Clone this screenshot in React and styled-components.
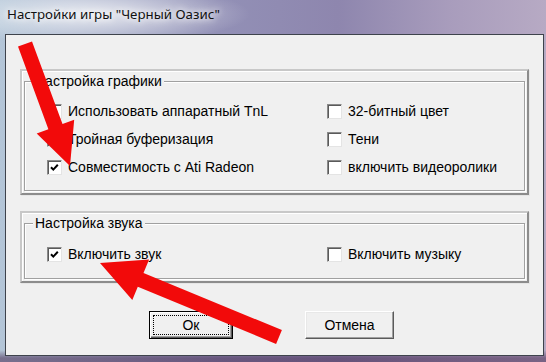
import React from 'react'
import styled, { createGlobalStyle } from 'styled-components'

const Global = createGlobalStyle`
  html, body { margin: 0; padding: 0; background: #8a88b0; }
  body { font-family: "Liberation Sans", Arial, sans-serif; }
`

// arrow polygon from tail to tip
function arrowPoints(tail, tip, shaft, headW, headL) {
  const dx = tip[0] - tail[0]
  const dy = tip[1] - tail[1]
  const len = Math.hypot(dx, dy)
  const ux = dx / len, uy = dy / len
  const px = -uy, py = ux
  const bx = tip[0] - ux * headL, by = tip[1] - uy * headL
  const pts = [
    [tail[0] + px * shaft / 2, tail[1] + py * shaft / 2],
    [bx + px * shaft / 2, by + py * shaft / 2],
    [bx + px * headW / 2, by + py * headW / 2],
    tip,
    [bx - px * headW / 2, by - py * headW / 2],
    [bx - px * shaft / 2, by - py * shaft / 2],
    [tail[0] - px * shaft / 2, tail[1] - py * shaft / 2],
  ]
  return pts.map(p => p[0].toFixed(1) + ',' + p[1].toFixed(1)).join(' ')
}

const graphics = [
  { label: 'Использовать аппаратный TnL' },
  { label: '32-битный цвет' },
  { label: 'Тройная буферизация' },
  { label: 'Тени' },
  { label: 'Совместимость с Ati Radeon', checked: true },
  { label: 'включить видеоролики' },
]

const sound = [
  { label: 'Включить звук', checked: true },
  { label: 'Включить музыку' },
]

function Check({ label, checked }) {
  return (
    <Option>
      <Box>
        {checked && (
          <svg width="11" height="11" viewBox="0 0 11 11">
            <path d="M2 5.2 L4.3 7.6 L8.8 2.8" fill="none" stroke="#000" strokeWidth="2" />
          </svg>
        )}
      </Box>
      <span>{label}</span>
    </Option>
  )
}

export default function App() {
  return (
    <>
      <Global />
      <Window>
        <TitleBar>Настройки игры "Черный Оазис"</TitleBar>
        <Client>
          <Panel $h={126}>
            <Group>
              <Legend>Настройка графики</Legend>
              <Options $rows={3} $top={8}>
                {graphics.map(o => <Check key={o.label} {...o} />)}
              </Options>
            </Group>
          </Panel>
          <Panel $h={72}>
            <Group>
              <Legend>Настройка звука</Legend>
              <Options $rows={1} $top={9}>
                {sound.map(o => <Check key={o.label} {...o} />)}
              </Options>
            </Group>
          </Panel>
          <Buttons>
            <Button $w={84} $default>
              <Focus>Ок</Focus>
            </Button>
            <Button $w={89}>
              <Focus $hidden>Отмена</Focus>
            </Button>
          </Buttons>
        </Client>
        <Arrows width="546" height="362" viewBox="0 0 546 362">
          <polygon points={arrowPoints([25, 44], [70, 166], 15, 40, 42)} fill="#f20a0a" />
          <polygon points={arrowPoints([279, 337], [100, 263], 15, 44, 44)} fill="#f20a0a" />
        </Arrows>
      </Window>
    </>
  )
}

const Window = styled.div`
  position: relative;
  width: 546px;
  height: 362px;
  overflow: hidden;
  box-sizing: border-box;
  padding: 0 2px 0 5px;
  background:
    linear-gradient(180deg, rgba(255,255,255,0) 0, rgba(255,255,255,0) 350px, rgba(70,40,80,0.55) 358px),
    radial-gradient(ellipse 160px 30px at 90px 14px, rgba(255,255,255,0.75), rgba(255,255,255,0)),
    linear-gradient(90deg, #b4c6d8 0%, #a9b3cc 14%, #9290b6 40%, #8e86ae 62%, #a89cbc 82%, #b7aac4 100%);
`

const TitleBar = styled.div`
  height: 34px;
  display: flex;
  align-items: center;
  padding-left: 2px;
  padding-bottom: 6px;
  box-sizing: border-box;
  font-family: "Noto Sans", "Open Sans", sans-serif;
  font-size: 13.3px;
  color: #111;
  text-shadow: 0 0 6px #fff, 0 0 10px #fff;
`

const Client = styled.div`
  width: 539px;
  height: 322px;
  box-sizing: border-box;
  background: #f0f0f0;
  border: 1px solid #3e434c;
  padding: 34px 0 0 14px;
  display: flex;
  flex-direction: column;
  gap: 16px;
  font-size: 14px;
  color: #000;
`

const Panel = styled.div`
  width: 509px;
  height: ${p => p.$h}px;
  box-sizing: border-box;
  display: flex;
  flex-direction: column;
  padding: 2px;
  border: 2px solid;
  border-color: #c8c8c8 #8c8c8c #8c8c8c #c8c8c8;
  box-shadow: inset 1px 1px #fff, 1px 1px #e6e6e6;
`

const Group = styled.fieldset`
  flex: 1;
  margin: 1px 0 0 0;
  padding: 0;
  min-width: 0;
  border: 1px solid #a0a0a0;
  box-shadow: inset 1px 1px #fff, 1px 1px #fff;
`

const Legend = styled.legend`
  margin-left: 8px;
  padding: 0 2px;
  line-height: 15px;
  background: #f0f0f0;
`

const Options = styled.div`
  display: grid;
  grid-template-columns: 280px 1fr;
  grid-template-rows: repeat(${p => p.$rows}, 28px);
  margin-top: ${p => p.$top}px;
  padding-left: 22px;
`

const Option = styled.label`
  display: flex;
  align-items: center;
  gap: 6px;
  white-space: nowrap;
`

const Box = styled.span`
  width: 15px;
  height: 15px;
  box-sizing: border-box;
  display: flex;
  align-items: center;
  justify-content: center;
  background: #fff;
  border: 1px solid;
  border-color: #8a8a8a #e4e4e4 #e4e4e4 #8a8a8a;
  box-shadow: inset 1px 1px #5a5a5a;
`

const Buttons = styled.div`
  display: flex;
  gap: 72px;
  margin-top: 12px;
  padding-left: 129px;
`

const Button = styled.button`
  width: ${p => p.$w}px;
  height: 28px;
  box-sizing: border-box;
  display: flex;
  padding: 3px;
  background: #f0f0f0;
  font-family: "Liberation Sans", Arial, sans-serif;
  font-size: 14px;
  color: #000;
  border: 1px solid;
  border-color: ${p => p.$default ? '#000' : '#fff #5a5a5a #5a5a5a #fff'};
  box-shadow: ${p => p.$default
    ? 'inset 1px 1px #fff, inset -1px -1px #5a5a5a, inset -2px -2px #a0a0a0'
    : 'inset -1px -1px #a0a0a0, inset 1px 1px #e8e8e8'};
`

const Focus = styled.span`
  flex: 1;
  display: flex;
  align-items: center;
  justify-content: center;
  border: 1px dotted ${p => p.$hidden ? 'transparent' : '#000'};
`

const Arrows = styled.svg`
  position: absolute;
  left: 0;
  top: 0;
  pointer-events: none;
`
